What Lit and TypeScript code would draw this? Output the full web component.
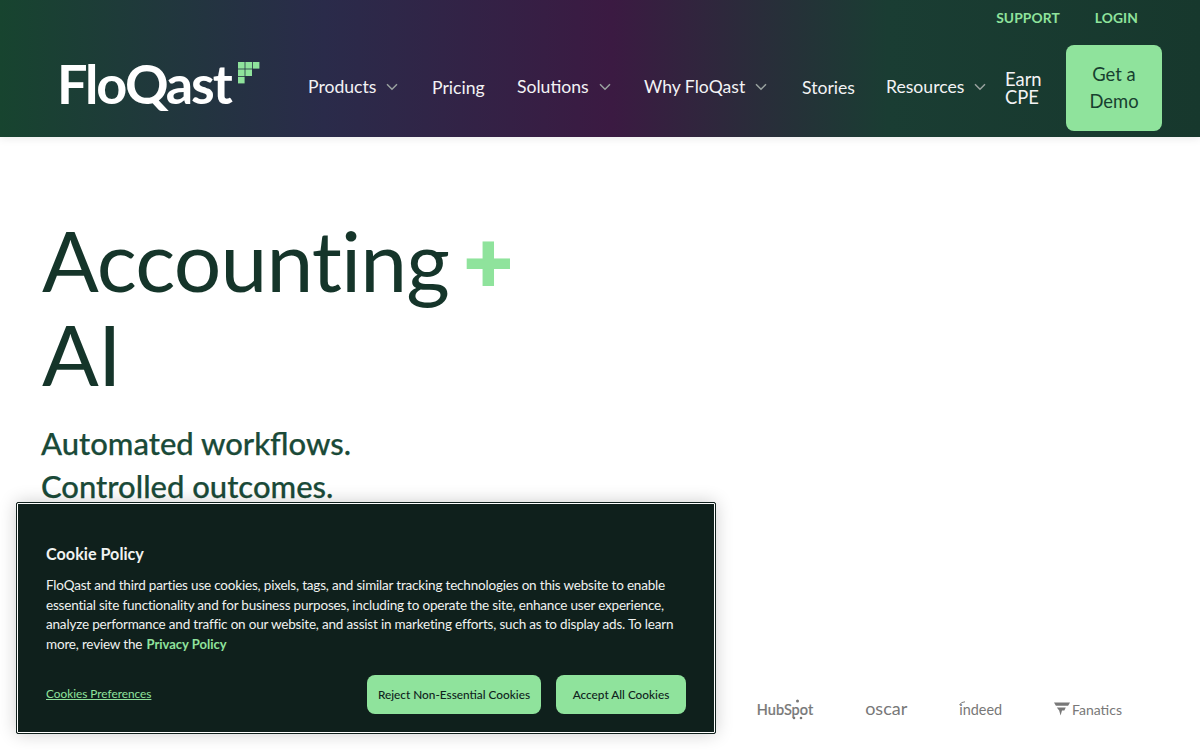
import { LitElement, html, css, svg } from "lit";
import { customElement } from "lit/decorators.js";

const chevron = html`<svg class="chev" width="12" height="8" viewBox="0 0 12 8" fill="none"><path d="M1 1.2 6 6.2 11 1.2" stroke="#9aa3a0" stroke-width="1.5"/></svg>`;

const squares: [number, number][] = [[0,0],[7.4,0],[14.8,0],[0,7.4],[7.4,7.4],[0,14.8]];

@customElement("app-root")
export class AppRoot extends LitElement {
  static styles = css`
    :host { display: block; width: 1200px; height: 750px; overflow: hidden; position: relative; background: #fff;
      font-family: "Lato", "Open Sans", sans-serif; }
    * { box-sizing: border-box; }
    header { height: 137px; padding: 0 38px 0 60px; display: flex; flex-direction: column;
      background: linear-gradient(90deg, #17442f 0%, #2a2b4a 27%, #3b1a42 51%, #1a3d33 74%, #17382d 100%);
      box-shadow: 0 2px 8px rgba(0,0,0,.08); }
    .top { height: 35px; display: flex; justify-content: flex-end; align-items: center; gap: 35px; padding-right: 24px; }
    .top a { font-size: 13.8px; font-weight: 700; color: #8fe39c; letter-spacing: .1px; }
    .main { flex: 1; display: flex; align-items: center; }
    .logo { width: 248px; display: flex; align-items: flex-start; color: #fff; font-size: 54px; line-height: 56px; font-weight: 700; letter-spacing: -2.1px; margin: -4px 0 0 -3px; flex: none; }
    .logo svg { margin: 6px 0 0 7px; }
    nav { flex: 1; display: flex; align-items: center; color: #f3f3f5; font-size: 17.6px; margin-top: 3px; margin-left: 3px; }
    nav a { display: flex; align-items: center; white-space: nowrap; }
    .dd { padding-bottom: 2px; }
    .chev { margin-left: 10px; }
    .cpe { line-height: 18px; white-space: normal; width: 45px; font-size: 18.4px; }
    .cta { margin-left: auto; width: 96px; height: 86px; background: #8fe39c; color: #17402f; border-radius: 8px;
      display: flex; align-items: center; justify-content: center; text-align: center; font-size: 18.4px; line-height: 27px; }
    .hero { height: 613px; padding: 76px 40px 0 42px; display: flex; flex-direction: column; position: relative; }
    h1 { margin: 0; font-weight: 400; font-size: 84px; line-height: 94px; color: #15352a; letter-spacing: -.9px; }
    .plus { color: #8fe39c; font-weight: 900; -webkit-text-stroke: 2px #8fe39c; margin-left: 15px; }
    .sub { margin: 21px 0 0 -1px; font-size: 31px; line-height: 43px; color: #1a4a38; font-weight: 500; -webkit-text-stroke: .25px #1a4a38; }
    .logos { margin-top: auto; margin-bottom: 30px; height: 22px; display: flex; justify-content: flex-end; align-items: center; gap: 52px; padding-right: 38px; color: #787878; }
    .logos span { display: flex; align-items: center; font-size: 14.4px; white-space: nowrap; position: relative; }
    .logos .hub { font-size: 14.5px; font-weight: 500; -webkit-text-stroke: .2px #787878; }
    .logos .oscar { font-size: 18px; line-height: 18px; padding-bottom: 3px; }
    .logos .fan { font-size: 14px; }
    .mark { position: absolute; }
    .cookie { position: absolute; left: 16px; top: 502px; width: 700px; height: 232px; background: #0f201c;
      border: 1px solid #0f201c; outline: 1px solid #fff; outline-offset: -2px; border-radius: 2px; padding: 40px 29px 0 29px;
      box-shadow: 0 0 18px rgba(0,0,0,.2); color: #f0f2f0; }
    .cookie h2 { margin: 0; font-size: 16.2px; line-height: 22px; font-weight: 700; }
    .cookie p { margin: 11px 0 0; font-size: 13.5px; letter-spacing: -.19px; line-height: 19.5px; white-space: nowrap; }
    .cookie p a { color: #8fe39c; font-weight: 700; margin-left: 1px; font-size: 13px; letter-spacing: 0; }
    .actions { margin-top: 21px; display: flex; align-items: center; }
    .pref { color: #8fe39c; text-decoration: underline; font-size: 11.8px; margin-right: auto; padding-bottom: 3px; }
    .btn { height: 39px; border: 0; font-family: inherit; border-radius: 8px; background: #8fe39c; color: #10231d; font-size: 11.8px; font-weight: 500;
      display: flex; align-items: center; justify-content: center; }
    .r { width: 174px; margin-right: 15px; }
    .a { width: 130px; }
  `;
  render() {
    return html`
      <header>
        <div class="top"><a>SUPPORT</a><a>LOGIN</a></div>
        <div class="main">
          <div class="logo">FloQast<svg width="22" height="22" viewBox="0 0 22 22">
            ${squares.map(([x, y]) => svg`<rect x=${x} y=${y} width="6.6" height="6.6" fill="#8fe39c"/>`)}
          </svg></div>
          <nav>
            <a class="dd" style="width:124px">Products ${chevron}</a>
            <a style="width:85px">Pricing</a>
            <a class="dd" style="width:127px">Solutions ${chevron}</a>
            <a class="dd" style="width:158px">Why FloQast ${chevron}</a>
            <a style="width:84px">Stories</a>
            <a class="dd" style="width:119px">Resources ${chevron}</a>
            <a class="cpe">Earn CPE</a>
            <a class="cta">Get a<br />Demo</a>
          </nav>
        </div>
      </header>
      <section class="hero">
        <h1>Accounting<span class="plus">+</span><br />AI</h1>
        <div class="sub">Automated workflows.<br />Controlled outcomes.</div>
        <div class="logos">
          <span class="hub">HubSpot<svg class="mark" style="left:35px;top:-2px" width="11" height="22" viewBox="0 0 11 22" fill="#787878"><circle cx="5.500" cy="2" r="1.500"/><circle cx="2" cy="19" r="1.300"/><circle cx="9" cy="19" r="1.300"/></svg></span>
          <span class="oscar">oscar</span>
          <span>indeed<svg class="mark" style="left:0;top:0" width="7" height="5" viewBox="0 0 7 5" fill="none"><path d="M.5 4Q2 .8 6 .8" stroke="#787878"/></svg></span>
          <span class="fan"><svg width="16" height="15" viewBox="0 0 17 15" style="margin-right:2px"><path d="M0 0H17L15 3.500H2ZM3 5.500H12.500L11 8.500H8.500L7 14 5.500 8.500Z" fill="#787878"/></svg>Fanatics</span>
        </div>
      </section>
      <div class="cookie">
        <h2>Cookie Policy</h2>
        <p>FloQast and third parties use cookies, pixels, tags, and similar tracking technologies on this website to enable<br />
        essential site functionality and for business purposes, including to operate the site, enhance user experience,<br />
        analyze performance and traffic on our website, and assist in marketing efforts, such as to display ads. To learn<br />
        more, review the <a>Privacy Policy</a></p>
        <div class="actions">
          <a class="pref">Cookies Preferences</a>
          <button class="btn r">Reject Non-Essential Cookies</button>
          <button class="btn a">Accept All Cookies</button>
        </div>
      </div>
    `;
  }
}
